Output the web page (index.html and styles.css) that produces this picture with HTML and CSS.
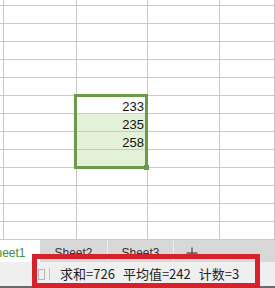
FILE: index.html
```html
<!DOCTYPE html>
<html>
<head>
<meta charset="utf-8">
<link rel="stylesheet" href="styles.css">
</head>
<body>
<div class="app">
  <div class="sheet">
    <div class="grid">
      <div class="c"></div><div class="c"></div><div class="c"></div><div class="c"></div><div class="c"></div>
      <div class="c"></div><div class="c"></div><div class="c"></div><div class="c"></div><div class="c"></div>
      <div class="c"></div><div class="c"></div><div class="c"></div><div class="c"></div><div class="c"></div>
      <div class="c"></div><div class="c"></div><div class="c"></div><div class="c"></div><div class="c"></div>
      <div class="c"></div><div class="c"></div><div class="c"></div><div class="c"></div><div class="c"></div>
      <div class="c"></div><div class="c"></div><div class="c"></div><div class="c"></div><div class="c"></div>
      <div class="c"></div><div class="c"></div><div class="c num">233</div><div class="c"></div><div class="c"></div>
      <div class="c"></div><div class="c"></div><div class="c num sel">235</div><div class="c"></div><div class="c"></div>
      <div class="c"></div><div class="c"></div><div class="c num sel">258</div><div class="c"></div><div class="c"></div>
      <div class="c"></div><div class="c"></div><div class="c sel"></div><div class="c"></div><div class="c"></div>
      <div class="c"></div><div class="c"></div><div class="c"></div><div class="c"></div><div class="c"></div>
      <div class="c"></div><div class="c"></div><div class="c"></div><div class="c"></div><div class="c"></div>
      <div class="c"></div><div class="c"></div><div class="c"></div><div class="c"></div><div class="c"></div>
      <div class="c"></div><div class="c"></div><div class="c"></div><div class="c"></div><div class="c"></div>
    </div>
    <div class="selection"><span class="handle"></span></div>
  </div>
  <div class="tabs">
    <div class="tab active">Sheet1</div>
    <div class="tab">Sheet2</div>
    <div class="tab sep">Sheet3</div>
    <div class="add">
      <svg width="12" height="12" viewBox="0 0 12 12"><path d="M6 0.5V11.5M0.5 6H11.5" stroke="#555" stroke-width="1.3" fill="none"/></svg>
    </div>
  </div>
  <div class="status">
    <span class="page-icon"></span>
    <span class="divider"></span>
    <span class="stat">求和=726</span>
    <span class="stat">平均值=242</span>
    <span class="stat">计数=3</span>
  </div>
  <div class="highlight"></div>
</div>
</body>
</html>
```
FILE: styles.css
```css
html, body {
  margin: 0;
  padding: 0;
  background: #fff;
}
.app {
  position: relative;
  width: 275px;
  height: 288px;
  overflow: hidden;
  font-family: "Liberation Sans", Arial, sans-serif;
}
.sheet {
  position: relative;
  height: 240px;
}
.grid {
  display: grid;
  grid-template-columns: 4px 73px 71px 72px 1fr;
  grid-template-rows: 6px repeat(13, 18px);
}
.c {
  box-sizing: border-box;
  border-right: 1px solid #c9c9c9;
  border-bottom: 1px solid #c9c9c9;
}
.sel {
  background: #e3f1d8;
}
.num {
  display: flex;
  justify-content: flex-end;
  align-items: flex-end;
  padding-right: 3px;
  font-size: 13px;
  line-height: 12px;
  color: #111;
}
.selection {
  position: absolute;
  left: 74px;
  top: 94px;
  width: 74px;
  height: 75px;
  box-sizing: border-box;
  border: 3px solid #6b9a48;
}
.handle {
  position: absolute;
  right: -4px;
  bottom: -4px;
  width: 5px;
  height: 5px;
  background: #6b9a48;
}
.tabs {
  display: flex;
  height: 22px;
  background: #d8d8d8;
  margin-top: 0;
}
.tab {
  box-sizing: border-box;
  width: 67px;
  flex: none;
  text-align: center;
  font-size: 12px;
  line-height: 14px;
  padding-top: 6px;
  color: #333;
}
.tab.active {
  margin-left: -27px;
  background: #fff;
  color: #3f8f34;
}
.tab.sep {
  border-left: 1px solid #ececec;
  border-right: 1px solid #ececec;
}
.add {
  display: flex;
  align-items: center;
  padding-left: 12px;
  padding-top: 3px;
}
.status {
  display: flex;
  align-items: center;
  height: 24px;
  background: #efefef;
  border-bottom: 2px solid #6a6a6a;
  padding-left: 38px;
  font-family: "Noto Sans CJK SC", "Liberation Sans", sans-serif;
  font-size: 13px;
  color: #222;
}
.page-icon {
  width: 5px;
  height: 9px;
  border: 1px solid #b5b5b5;
  flex: none;
}
.divider {
  width: 1px;
  height: 12px;
  background: #c4c4c4;
  margin-left: 4px;
  margin-right: 10px;
  flex: none;
}
.stat {
  margin-right: 8px;
  line-height: 16px;
}
.highlight {
  position: absolute;
  left: 32px;
  top: 254px;
  width: 228px;
  height: 34px;
  box-sizing: border-box;
  border: 5px solid #d6232b;
}
```
